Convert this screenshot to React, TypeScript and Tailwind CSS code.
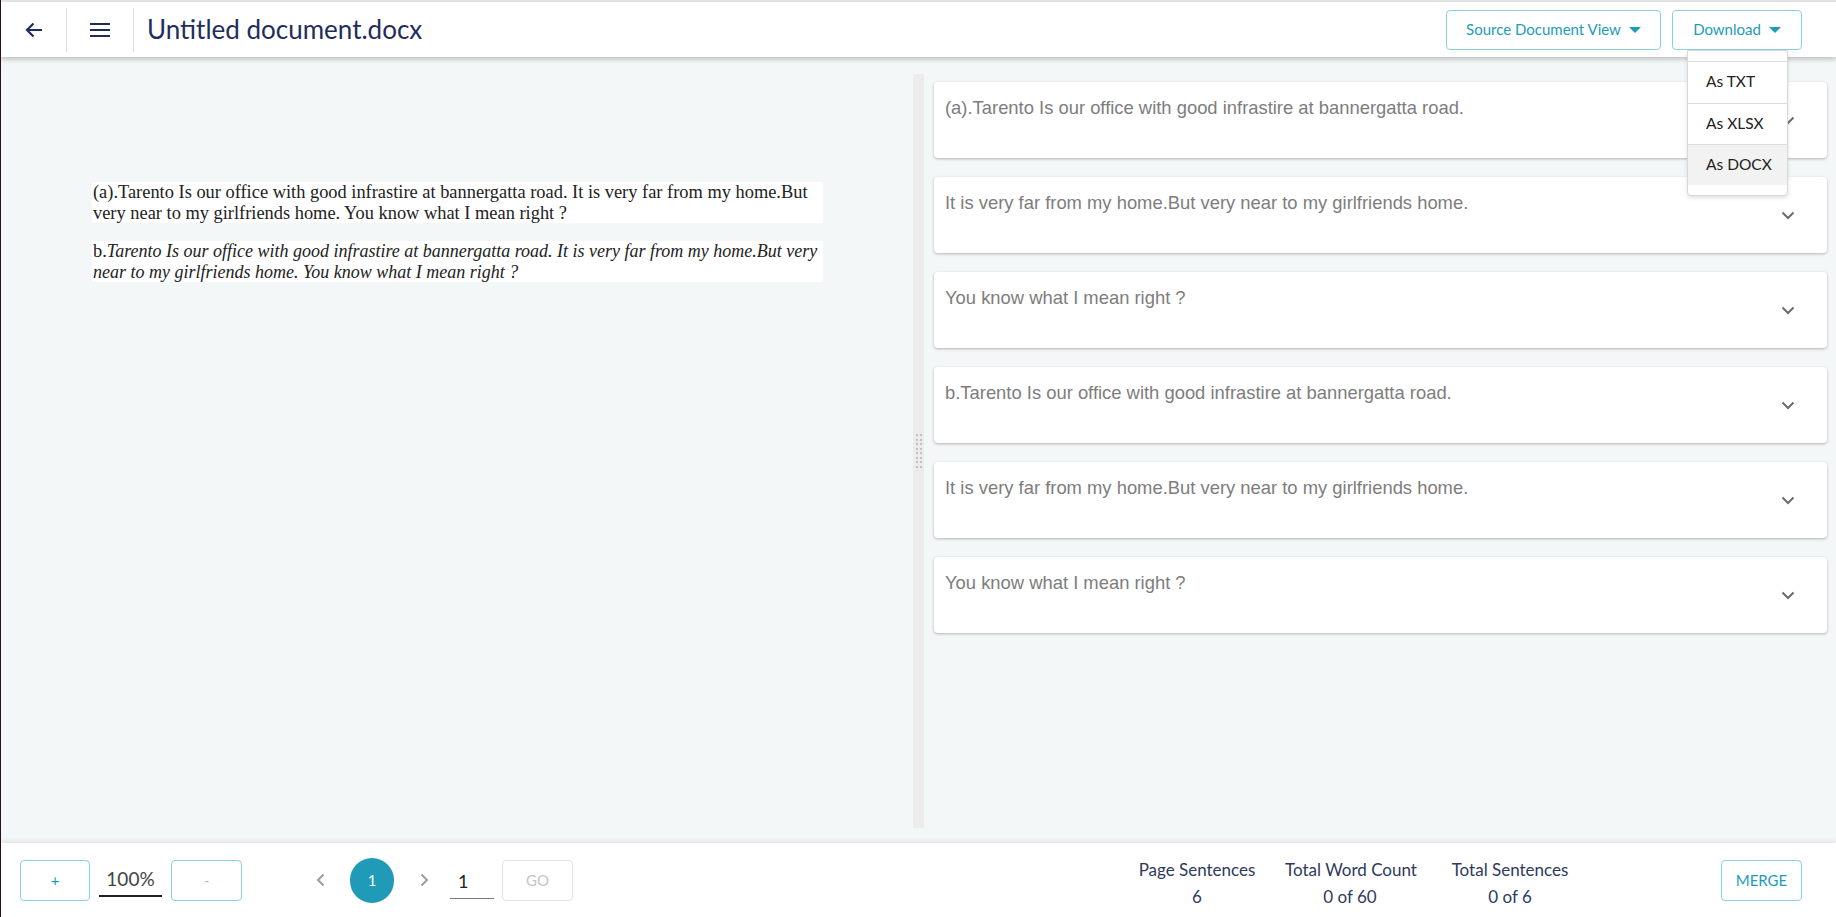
import React from "react";

const ui = { fontFamily: "Lato, 'Open Sans', sans-serif" };
const serif = { fontFamily: "'Liberation Serif', 'Times New Roman', serif" };
const arial = { fontFamily: "'Liberation Sans', Arial, sans-serif" };

const sentences = [
  "(a).Tarento Is our office with good infrastire at bannergatta road.",
  "It is very far from my home.But very near to my girlfriends home.",
  "You know what I mean right ?",
  "b.Tarento Is our office with good infrastire at bannergatta road.",
  "It is very far from my home.But very near to my girlfriends home.",
  "You know what I mean right ?",
];

const stats = [
  { label: "Page Sentences", value: "6" },
  { label: "Total Word Count", value: "0 of 60" },
  { label: "Total Sentences", value: "0 of 6" },
];

const Caret = () => (
  <svg width="12" height="6" viewBox="0 0 12 6" className="ml-[8px]">
    <path d="M0 0 L12 0 L6 6 Z" fill="#1e9bb8" />
  </svg>
);

const ChevronDown = () => (
  <svg width="14" height="9" viewBox="0 0 14 9">
    <path d="M1.5 1.5 L7 7 L12.5 1.5" fill="none" stroke="#6b6b6b" strokeWidth="2" />
  </svg>
);

const SentenceCard = ({ text }: { text: string }) => (
  <div className="h-[76px] bg-white rounded-[4px] shadow-[0_1px_3px_rgba(0,0,0,0.28)] flex items-start justify-between pl-[11px] pr-[32px]">
    <p className="pt-[13px] text-[18.4px] leading-[26px] text-[#7d7d7d]" style={arial}>
      {text}
    </p>
    <div className="h-[76px] flex items-center">
      <ChevronDown />
    </div>
  </div>
);

const App = () => {
  return (
    <div className="h-[917px] w-full flex flex-col bg-[#f4f7f8] border-l border-l-[#2b0f1f] overflow-hidden" style={ui}>
      {/* header */}
      <header className="relative z-20 h-[57px] shrink-0 bg-white border-t-2 border-t-[#e2e2e2] shadow-[0_2px_5px_rgba(0,0,0,0.25)] flex items-center">
        <div className="w-[66px] h-[44px] border-r border-[#dcdcdc] flex items-center justify-center">
          <svg width="18" height="16" viewBox="0 0 18 16">
            <path d="M17 8 H2 M8.5 1.5 L2 8 L8.5 14.5" fill="none" stroke="#1f2d5c" strokeWidth="2.2" />
          </svg>
        </div>
        <div className="w-[67px] h-[44px] border-r border-[#dcdcdc] flex items-center justify-center">
          <svg width="20" height="14" viewBox="0 0 20 14">
            <path d="M0 1 H20 M0 7 H20 M0 13 H20" fill="none" stroke="#1f2d5c" strokeWidth="2" />
          </svg>
        </div>
        <h1 className="pl-[13px] text-[26px] text-[#1f2d5c]">Untitled document.docx</h1>
        <div className="ml-auto mr-[34px] flex gap-[11px]">
          <button className="w-[215px] h-[40px] rounded-[4px] border border-[#8ccfde] text-[15px] text-[#1e9bb8] flex items-center justify-center">
            Source Document View
            <Caret />
          </button>
          <div className="relative">
            <button className="w-[130px] h-[40px] rounded-[4px] border border-[#8ccfde] text-[15px] text-[#1e9bb8] flex items-center justify-center">
              Download
              <Caret />
            </button>
            <div className="absolute left-[15px] top-[40px] w-[101px] bg-white border border-[#d9d9d9] rounded-b-[4px] shadow-[0_2px_4px_rgba(0,0,0,0.12)] pt-[10px] pb-[10px]">
              <div className="border-t border-[#dcdcdc]" />
              {["As TXT", "As XLSX", "As DOCX"].map((label, i) => (
                <div
                  key={label}
                  className={
                    "h-[41px] pl-[18px] flex items-center text-[15.5px] text-[#222] " +
                    (i > 0 ? "border-t border-[#dcdcdc] " : "") +
                    (i === 2 ? "bg-[#f2f2f2]" : "")
                  }
                >
                  {label}
                </div>
              ))}
            </div>
          </div>
        </div>
      </header>

      {/* body */}
      <main className="flex-1 flex min-h-0">
        <section className="w-[912px] shrink-0 pt-[125px] pl-[91px]">
          <div className="w-[731px] flex flex-col gap-[18px] text-[18.4px] leading-[20.5px] text-[#222]" style={serif}>
            <p className="bg-white px-[1px]">
              (a).Tarento Is our office with good infrastire at bannergatta road. It is very far from my home.But very near to my girlfriends home. You know what I mean right ?
            </p>
            <p className="bg-white px-[1px]">
              b.<i className="text-[18px]">Tarento Is our office with good infrastire at bannergatta road. It is very far from my home.But very near to my girlfriends home. You know what I mean right ?</i>
            </p>
          </div>
        </section>

        <div className="w-[11px] shrink-0 mt-[17px] mb-[15px] bg-[#ececec] flex items-center justify-center">
          <div className="grid grid-cols-2 gap-x-[2px] gap-y-[2.5px]">
            {Array.from({ length: 16 }).map((_, i) => (
              <span key={i} className="w-[2px] h-[2px] bg-[#c2c2c2]" />
            ))}
          </div>
        </div>

        <section className="flex-1 pl-[10px] pr-[9px] pt-[25px] flex flex-col gap-[19px]">
          {sentences.map((s, i) => (
            <SentenceCard key={i} text={s} />
          ))}
        </section>
      </main>

      {/* footer */}
      <footer className="relative z-10 h-[74px] shrink-0 bg-white shadow-[0_-2px_5px_rgba(0,0,0,0.08)] flex items-center pl-[19px]">
        <button className="w-[70px] h-[41px] rounded-[4px] border border-[#8ccfde] text-[15px] text-[#1e9bb8]">+</button>
        <div className="ml-[9px] w-[63px] h-[34px] border-b-2 border-[#222] flex items-end justify-center pb-[2px] text-[19px] text-[#444]">
          100%
        </div>
        <button className="ml-[9px] w-[71px] h-[41px] rounded-[4px] border border-[#8ccfde] text-[15px] text-[#8ccfde]">-</button>

        <svg width="9" height="14" viewBox="0 0 9 14" className="ml-[74px]">
          <path d="M7.5 1.5 L2 7 L7.5 12.5" fill="none" stroke="#9e9e9e" strokeWidth="2" />
        </svg>
        <div className="ml-[25px] w-[44px] h-[45px] rounded-full bg-[#1f9bb7] flex items-center justify-center text-[15px] text-white">
          1
        </div>
        <svg width="9" height="14" viewBox="0 0 9 14" className="ml-[26px]">
          <path d="M1.5 1.5 L7 7 L1.5 12.5" fill="none" stroke="#9e9e9e" strokeWidth="2" />
        </svg>
        <div className="ml-[21px] w-[44px] h-[38px] border-b border-[#777] flex items-end pl-[8px] pb-[3px] text-[18px] text-[#222]">
          1
        </div>
        <button className="ml-[8px] w-[71px] h-[41px] rounded-[4px] border border-[#e3e3e3] text-[15px] text-[#c4c4c4]">GO</button>

        <div className="ml-auto pt-[5px] flex text-[17px] leading-[27px] text-[#2d3a5e] text-center">
          {stats.map((s, i) => (
            <div key={s.label} className={"w-[130px] " + (i === 1 ? "ml-[23px]" : i === 2 ? "ml-[30px]" : "")}>
              <div className="whitespace-nowrap">{s.label}</div>
              <div>{s.value}</div>
            </div>
          ))}
        </div>
        <button className="ml-[146px] mr-[34px] w-[81px] h-[41px] rounded-[4px] border border-[#8ccfde] text-[15px] text-[#1e9bb8]">
          MERGE
        </button>
      </footer>
    </div>
  );
};

export default App;
